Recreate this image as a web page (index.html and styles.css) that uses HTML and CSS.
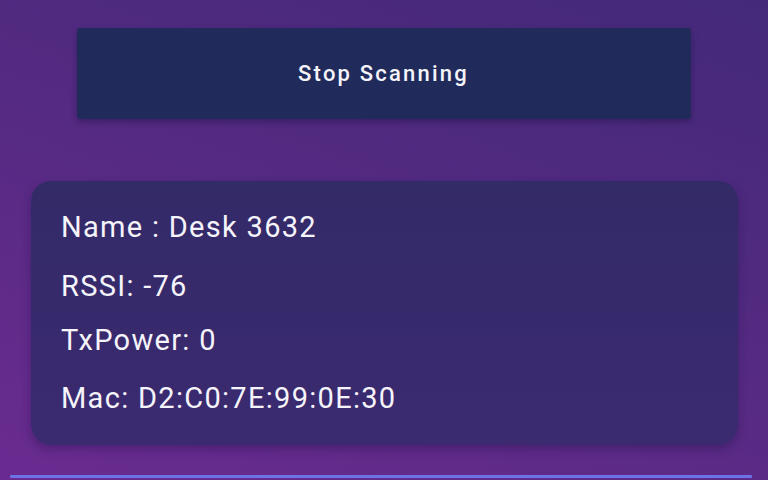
FILE: index.html
```html
<!DOCTYPE html>
<html>
<head>
	<title>BLE Scanner</title>
	<link rel="stylesheet" href="styles.css">
</head>
<body>
<div class="screen">
	<div class="actions">
		<button class="scanButton">Stop Scanning</button>
	</div>

	<div class="deviceCard">
		<p class="field name">Name : Desk 3632</p>
		<p class="field rssi">RSSI: -76</p>
		<p class="field tx">TxPower: 0</p>
		<p class="field mac">Mac: D2:C0:7E:99:0E:30</p>
	</div>

	<div class="divider"></div>
</div>
</body>
</html>
```

FILE: styles.css
```css
html, body {
	margin: 0;
	height: 100%;
}

body {
	background: linear-gradient(200deg, #44297a 0%, #512a80 40%, #6a2b90 100%);
	font-family: Roboto, "Noto Sans", sans-serif;
	color: #fff;
	overflow: hidden;
}

.screen {
	display: flex;
	flex-direction: column;
	height: 480px;
	padding: 0 16px 0 10px;
	box-sizing: border-box;
}

.actions {
	display: flex;
	justify-content: center;
	padding: 28px 0 0 0;
}

.scanButton {
	width: 614px;
	height: 91px;
	margin-left: 5px;
	border: none;
	border-radius: 3px;
	background-color: #212b5b;
	color: #f4f4fa;
	font-family: Roboto, sans-serif;
	font-weight: 500;
	font-size: 22px;
	letter-spacing: 2.2px;
	box-shadow: 0 3px 6px rgba(20, 10, 50, 0.35);
}

.deviceCard {
	margin: 62px 14px 0 21px;
	height: 264px;
	box-sizing: border-box;
	padding: 29px 30px 0 30px;
	border-radius: 20px;
	background: linear-gradient(180deg, #332a68 0%, #3b2a70 100%);
	box-shadow: 0 4px 10px rgba(30, 15, 70, 0.35);
}

.field {
	margin: 0;
	font-size: 29px;
	line-height: 34px;
	letter-spacing: 1.3px;
	color: #f6f4fb;
}

.name {
	margin-bottom: 25px;
}

.rssi {
	margin-bottom: 20px;
}

.tx {
	margin-bottom: 24px;
}

.divider {
	margin-top: 30px;
	height: 3px;
	background-color: #6d72e6;
	border-radius: 1px;
}
```
